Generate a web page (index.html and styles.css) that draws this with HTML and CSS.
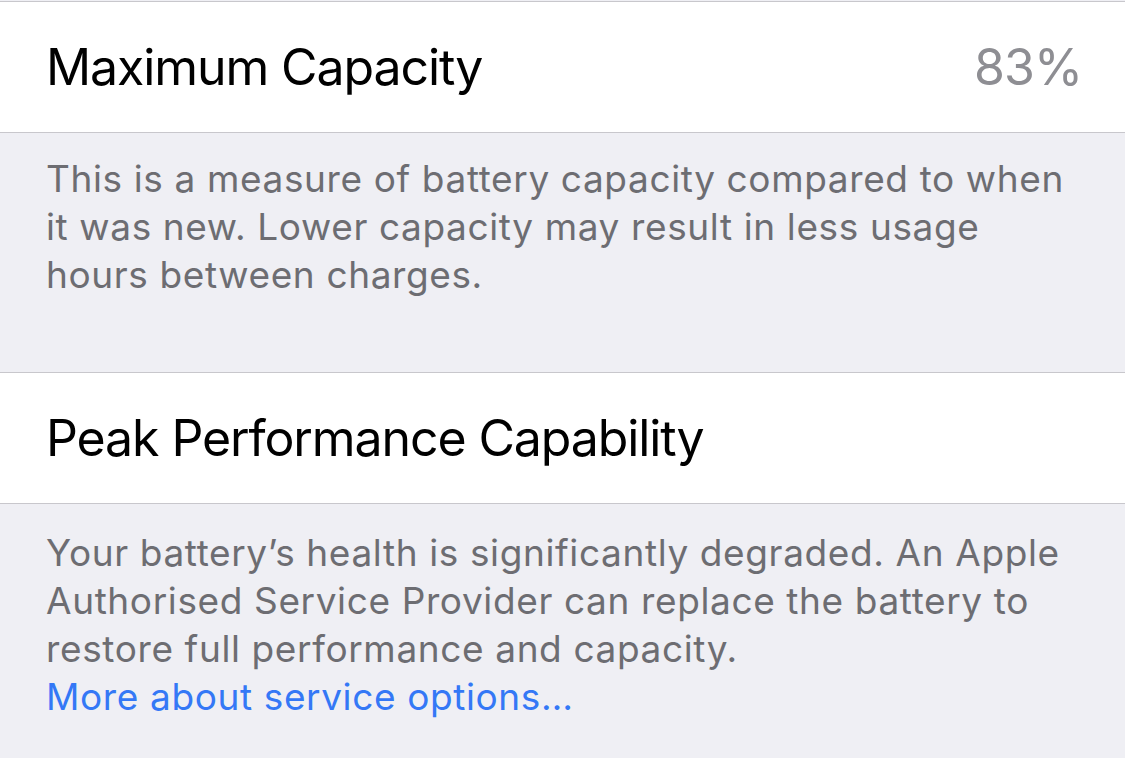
FILE: index.html
```html
<!DOCTYPE html>
<html>
<head>
<meta charset="utf-8">
<link rel="stylesheet" href="styles.css">
</head>
<body>
<div class="page">
  <div class="cell cell-first">
    <span class="cell-title">Maximum Capacity</span>
    <span class="cell-value">83%</span>
  </div>
  <div class="footer footer-first">This is a measure of battery capacity compared to when it was new. Lower capacity may result in less usage hours between charges.</div>
  <div class="cell">
    <span class="cell-title">Peak Performance Capability</span>
  </div>
  <div class="footer footer-second">Your battery’s health is significantly degraded. An Apple Authorised Service Provider can replace the battery to restore full performance and capacity.<br><a class="footer-link" href="#">More about service options…</a></div>
</div>
</body>
</html>
```
FILE: styles.css
```css
html, body {
  margin: 0;
  padding: 0;
  background: #efeff4;
}
.page {
  font-family: Inter, "Noto Sans", "Liberation Sans", sans-serif;
  padding-top: 1px;
}
.cell {
  background: #ffffff;
  border-top: 1px solid #c8c7cc;
  border-bottom: 1px solid #c8c7cc;
  height: 130px;
  display: flex;
  align-items: center;
  justify-content: space-between;
  padding: 0 43px 0 46px;
}
.cell-title {
  font-size: 50px;
  color: #000;
  letter-spacing: -1.1px;
}
.cell-value {
  font-size: 50px;
  color: #8e8e93;
  letter-spacing: -1px;
}
.footer {
  color: #6d6d72;
  font-size: 37px;
  line-height: 48px;
  padding: 22px 48px 73px 46px;
  letter-spacing: 0.62px;
}
.footer-second {
  padding-top: 25px;
  padding-bottom: 40px;
}
.footer-link {
  color: #3478f6;
  text-decoration: none;
}
```
